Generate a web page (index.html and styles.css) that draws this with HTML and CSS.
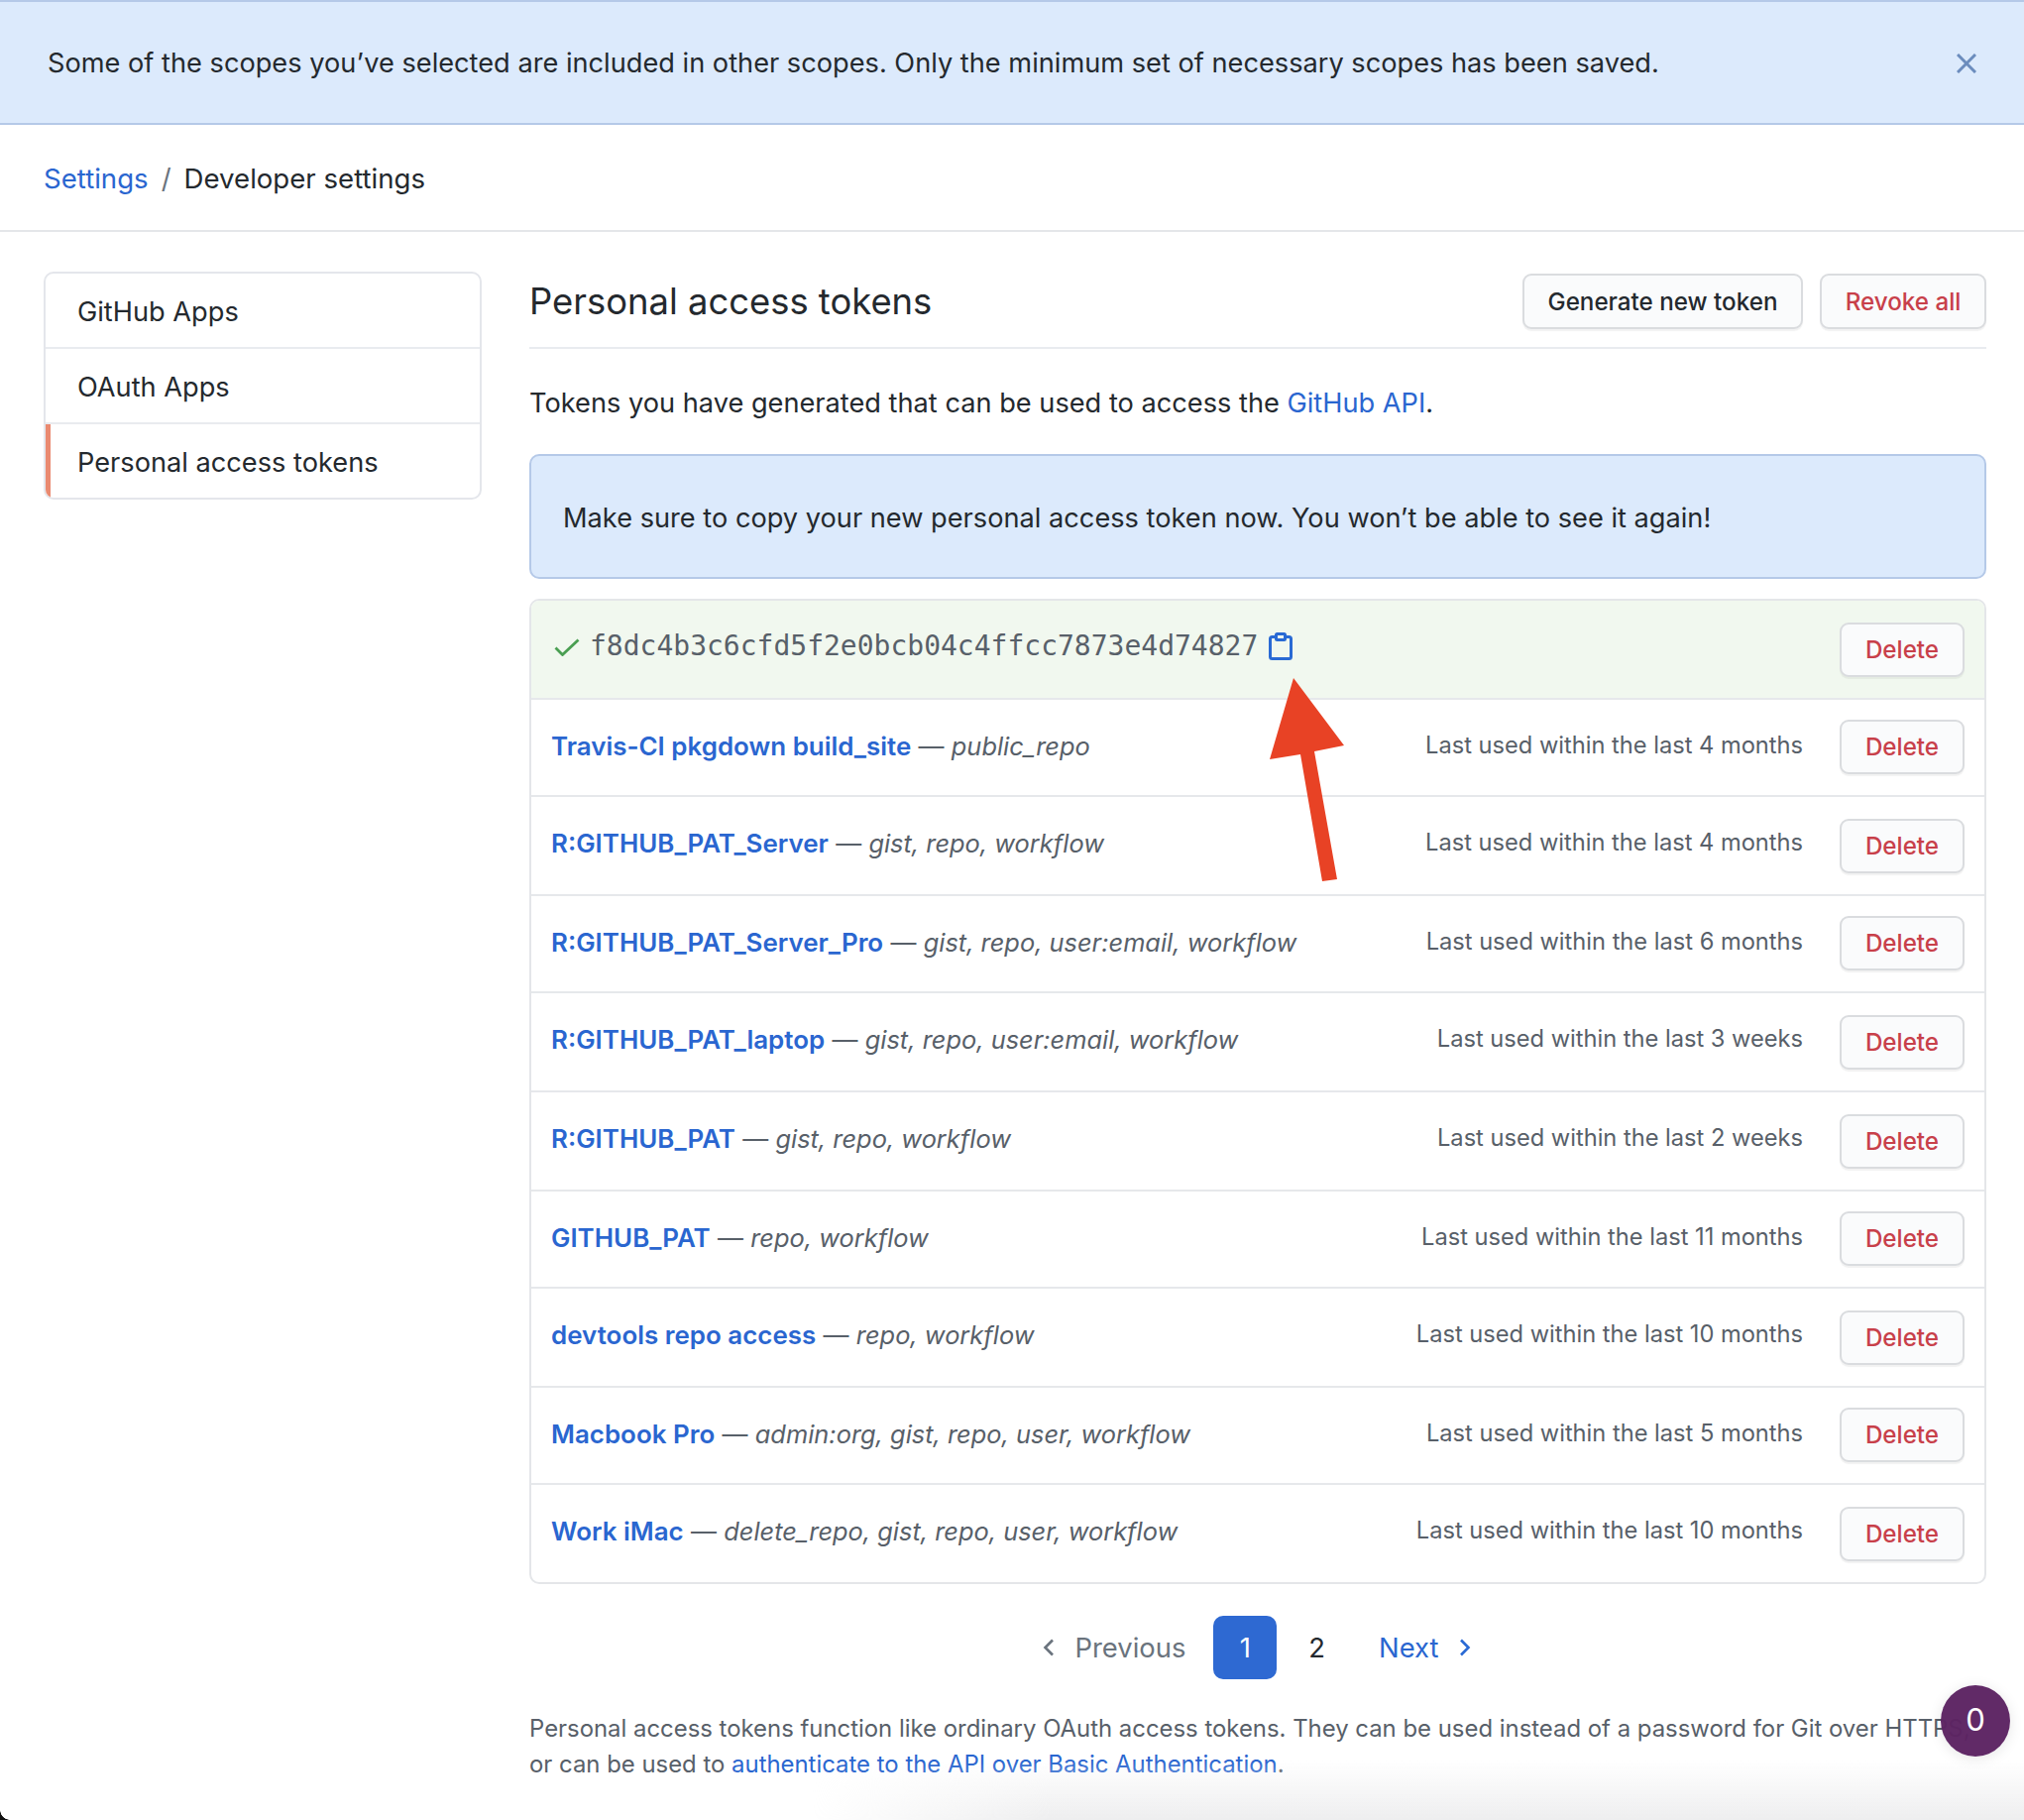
FILE: index.html
```html
<!DOCTYPE html>
<html lang="en">
<head>
<meta charset="utf-8">
<title>Personal access tokens</title>
<link rel="stylesheet" href="styles.css">
</head>
<body>
<div class="flash">
  <span>Some of the scopes you’ve selected are included in other scopes. Only the minimum set of necessary scopes has been saved.</span>
  <svg class="flash-close" viewBox="0 0 20 20" width="20" height="20"><path d="M1 1L19 19M19 1L1 19" fill="none" stroke="#6b8cbd" stroke-width="3"/></svg>
</div>
<nav class="crumbs"><a href="#">Settings</a><span class="crumb-sep">/</span><span>Developer settings</span></nav>
<div class="layout">
  <aside class="menu">
    <a class="menu-item">GitHub Apps</a>
    <a class="menu-item">OAuth Apps</a>
    <a class="menu-item current">Personal access tokens</a>
  </aside>
  <main class="main">
    <header class="head">
      <h1>Personal access tokens</h1>
      <div class="head-actions">
        <button class="btn btn-gen">Generate new token</button>
        <button class="btn btn-danger btn-revoke">Revoke all</button>
      </div>
    </header>
    <p class="intro">Tokens you have generated that can be used to access the <a href="#">GitHub API</a>.</p>
    <div class="notice">Make sure to copy your new personal access token now. You won’t be able to see it again!</div>
    <div class="tokens">
      <div class="row new">
        <svg class="check" viewBox="0 0 26 18" width="26" height="18"><path d="M1.5 9.5L8.5 16.5L24.5 1.5" fill="none" stroke="#4a9f52" stroke-width="2.8"/></svg>
        <code class="token">f8dc4b3c6cfd5f2e0bcb04c4ffcc7873e4d74827</code>
        <svg class="copy" viewBox="0 0 24 28" width="24" height="28"><path d="M6 4.5H3.5A2 2 0 0 0 1.5 6.5V24.5A2 2 0 0 0 3.5 26.5H20.5A2 2 0 0 0 22.5 24.5V6.5A2 2 0 0 0 20.5 4.5H18" fill="none" stroke="#2a6ad4" stroke-width="3"/><rect x="7.5" y="1.5" width="9" height="6" rx="1" fill="#f1f8ef" stroke="#2a6ad4" stroke-width="3"/></svg>
        <button class="btn btn-danger btn-del new-del">Delete</button>
      </div>
      <div class="row"><div class="name"><a href="#">Travis-CI pkgdown build_site</a> <span class="dash">—</span> <em>public_repo</em></div><div class="used">Last used within the last 4 months</div><button class="btn btn-danger btn-del">Delete</button></div>
      <div class="row tall"><div class="name"><a href="#">R:GITHUB_PAT_Server</a> <span class="dash">—</span> <em>gist, repo, workflow</em></div><div class="used">Last used within the last 4 months</div><button class="btn btn-danger btn-del">Delete</button></div>
      <div class="row"><div class="name"><a href="#">R:GITHUB_PAT_Server_Pro</a> <span class="dash">—</span> <em>gist, repo, user:email, workflow</em></div><div class="used">Last used within the last 6 months</div><button class="btn btn-danger btn-del">Delete</button></div>
      <div class="row tall"><div class="name"><a href="#">R:GITHUB_PAT_laptop</a> <span class="dash">—</span> <em>gist, repo, user:email, workflow</em></div><div class="used">Last used within the last 3 weeks</div><button class="btn btn-danger btn-del">Delete</button></div>
      <div class="row tall"><div class="name"><a href="#">R:GITHUB_PAT</a> <span class="dash">—</span> <em>gist, repo, workflow</em></div><div class="used">Last used within the last 2 weeks</div><button class="btn btn-danger btn-del">Delete</button></div>
      <div class="row"><div class="name"><a href="#">GITHUB_PAT</a> <span class="dash">—</span> <em>repo, workflow</em></div><div class="used">Last used within the last 11 months</div><button class="btn btn-danger btn-del">Delete</button></div>
      <div class="row tall"><div class="name"><a href="#">devtools repo access</a> <span class="dash">—</span> <em>repo, workflow</em></div><div class="used">Last used within the last 10 months</div><button class="btn btn-danger btn-del">Delete</button></div>
      <div class="row"><div class="name"><a href="#">Macbook Pro</a> <span class="dash">—</span> <em>admin:org, gist, repo, user, workflow</em></div><div class="used">Last used within the last 5 months</div><button class="btn btn-danger btn-del">Delete</button></div>
      <div class="row tall last"><div class="name"><a href="#">Work iMac</a> <span class="dash">—</span> <em>delete_repo, gist, repo, user, workflow</em></div><div class="used">Last used within the last 10 months</div><button class="btn btn-danger btn-del">Delete</button></div>
    </div>
    <div class="pager">
      <span class="page-prev"><svg viewBox="0 0 12 18" width="12" height="18"><path d="M10 1.5L2.5 9L10 16.5" fill="none" stroke="#6a737d" stroke-width="2.6"/></svg>Previous</span>
      <span class="page-cur">1</span>
      <span class="page-num">2</span>
      <a class="page-next" href="#">Next<svg viewBox="0 0 12 18" width="12" height="18"><path d="M2 1.5L9.5 9L2 16.5" fill="none" stroke="#2a6ad4" stroke-width="2.6"/></svg></a>
    </div>
    <p class="foot">Personal access tokens function like ordinary OAuth access tokens. They can be used instead of a password for Git over HTTPS,<br>or can be used to <a href="#">authenticate to the API over Basic Authentication</a>.</p>
  </main>
</div>
<svg class="arrow" viewBox="0 0 80 210" width="80" height="210"><path d="M24 0L0 82L31 77L53 205L68 203L45 74L75 68Z" fill="#e84225"/></svg>
<div class="badge">0</div>
<div class="shade"></div>
<div class="corner"></div>
</body>
</html>
```

FILE: styles.css
```css
* { box-sizing: border-box; }
html, body { margin: 0; padding: 0; }
body {
  position: relative;
  width: 2042px;
  height: 1836px;
  overflow: hidden;
  background: #fff;
  color: #24292e;
  font-family: Inter, "Liberation Sans", sans-serif;
  font-size: 27.2px;
}
a { color: #2a66d0; text-decoration: none; }

.flash {
  height: 126px;
  padding: 1px 48px 0;
  display: flex;
  align-items: center;
  justify-content: space-between;
  background: #dceafc;
  border-top: 2px solid #b5c9e8;
  border-bottom: 2px solid #b5c9e8;
}
.crumbs {
  height: 108px;
  padding: 2px 44px 0;
  display: flex;
  align-items: center;
  border-bottom: 2px solid #e4e6e9;
  font-size: 27.6px;
}
.crumb-sep { color: #6a737d; margin: 0 13px; }

.layout { display: flex; gap: 48px; padding: 40px 38px 0 44px; }
.menu {
  flex: none;
  align-self: flex-start;
  width: 442px;
  height: 230px;
  border: 2px solid #e4e6eb;
  border-radius: 10px;
  overflow: hidden;
}
.menu-item {
  display: flex;
  align-items: center;
  height: 76px;
  padding: 2px 32px 0;
  border-bottom: 2px solid #e9ebef;
  color: #24292e;
}
.menu-item.current {
  border-bottom: 0;
  border-left: 5px solid #ea8a70;
  padding: 0 32px 0 27px;
}

.main { flex: 1; min-width: 0; }
.head {
  height: 78px;
  padding-top: 2px;
  display: flex;
  justify-content: space-between;
  align-items: flex-start;
  border-bottom: 2px solid #e9ebef;
}
h1 { margin: 0; font-size: 36.4px; font-weight: 400; line-height: 56px; }
.head-actions { display: flex; gap: 17px; }
.btn {
  height: 56px;
  border: 2px solid #dadcdf;
  border-radius: 9px;
  background: #fafbfc;
  box-shadow: 0 2px 1px rgba(27, 31, 35, .06);
  color: #24292e;
  font-family: inherit;
  font-size: 24.2px;
  font-weight: 500;
  padding: 0;
}
.btn-danger { color: #c8404a; }
.btn-gen { width: 283px; }
.btn-revoke { width: 168px; }
.btn-del { flex: none; width: 126px; height: 55px; }

.intro { margin: 0; height: 106px; padding-top: 35px; line-height: 40px; }
.notice {
  height: 126px;
  display: flex;
  align-items: center;
  padding: 2px 32px 0;
  background: #dceafc;
  border: 2px solid #b5c9e8;
  border-radius: 10px;
}
.tokens {
  margin-top: 20px;
  border: 2px solid #e4e6e9;
  border-radius: 10px;
  overflow: hidden;
}
.row {
  height: 98px;
  padding: 0 20px 21px 20px;
  display: flex;
  align-items: flex-end;
  border-bottom: 2px solid #e6e8eb;
}
.row.tall { height: 100px; }
.row.last { height: 98px; border-bottom: 0; }
.row.new { height: 100px; background: #f1f8ef; }
.check { align-self: flex-start; margin: 38px 10px 0 3px; flex: none; }
.token {
  align-self: flex-start;
  margin-top: 26px;
  font-family: "DejaVu Sans Mono", "Liberation Mono", monospace;
  font-size: 28px;
  line-height: 40px;
  color: #586069;
}
.copy { align-self: flex-start; margin: 32px 0 0 11px; flex: none; }
.new-del { margin-left: auto; }
.name {
  align-self: flex-start;
  margin-top: 27px;
  flex: 1;
  line-height: 40px;
  font-size: 25.95px;
  color: #586069;
  white-space: nowrap;
}
.name a { font-weight: 600; }
.name em { font-style: italic; font-size: 25.4px; }
.used {
  align-self: flex-start;
  margin: 26px 37px 0 0;
  line-height: 40px;
  font-size: 23.65px;
  color: #586069;
  white-space: nowrap;
}

.pager {
  height: 128px;
  padding-right: 2px;
  display: flex;
  align-items: center;
  justify-content: center;
  font-size: 27.4px;
}
.page-prev { display: flex; align-items: center; gap: 20px; color: #6a737d; }
.page-cur {
  width: 64px;
  height: 64px;
  margin-left: 28px;
  display: flex;
  align-items: center;
  justify-content: center;
  border-radius: 10px;
  background: #2e69d2;
  color: #fff;
}
.page-num { margin: 0 54px 0 32px; }
.page-next { display: flex; align-items: center; gap: 20px; }

.foot { margin: 0; font-size: 23.9px; line-height: 36px; color: #586069; white-space: nowrap; }

.arrow { position: absolute; left: 1281px; top: 684px; }
.badge {
  position: absolute;
  left: 1958px;
  top: 1700px;
  width: 70px;
  height: 72px;
  border-radius: 50%;
  display: flex;
  align-items: center;
  justify-content: center;
  padding-bottom: 4px;
  background: rgba(92, 35, 98, .97);
  color: #fff;
  font-size: 31px;
  box-shadow: 0 2px 14px rgba(0, 0, 0, .1);
}
.shade {
  position: absolute;
  left: 820px;
  right: 0;
  bottom: 0;
  height: 60px;
  background: linear-gradient(#fff0, #eeeeef);
  -webkit-mask-image: linear-gradient(90deg, transparent, #000 240px);
  mask-image: linear-gradient(90deg, transparent, #000 240px);
}
.corner {
  position: absolute;
  left: 0;
  bottom: 0;
  width: 10px;
  height: 10px;
  background: radial-gradient(circle at 100% 0, transparent 9.5px, #111 10px);
}
```
